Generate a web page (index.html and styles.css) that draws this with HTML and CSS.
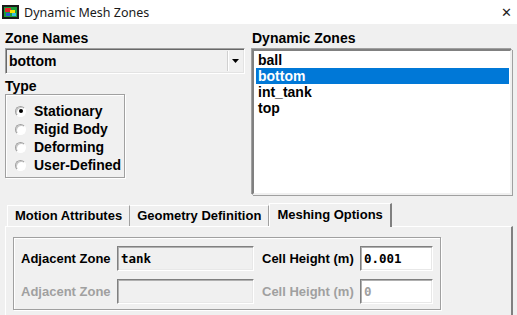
FILE: index.html
```html
<!DOCTYPE html>
<html lang="en">
<head>
  <meta charset="UTF-8">
  <title>Dynamic Mesh Zones</title>
  <link rel="stylesheet" href="styles.css">
</head>
<body>
  <div class="window">
    <div class="titlebar">
      <svg class="app-icon" width="17" height="14" viewBox="0 0 17 14">
        <rect x="0" y="0" width="17" height="14" fill="#1a1a1a"/>
        <rect x="2" y="2" width="13" height="10" fill="#1e9e3a"/>
        <rect x="3" y="3" width="6" height="4" fill="#e8262a"/>
        <rect x="8" y="5" width="5" height="3" fill="#f4e000"/>
        <rect x="4" y="8" width="4" height="3" fill="#2a5ad8"/>
        <rect x="10" y="8" width="4" height="3" fill="#35c0e0"/>
      </svg>
      <span class="title">Dynamic Mesh Zones</span>
      <span class="close">&#x2715;</span>
    </div>

    <div class="top">
      <div class="left-col">
        <div class="label">Zone Names</div>
        <div class="combo">
          <span class="combo-text">bottom</span>
          <span class="combo-btn">
            <svg width="7" height="4" viewBox="0 0 7 4"><path d="M0 0h7L3.5 4z" fill="#000"/></svg>
          </span>
        </div>
        <div class="label type-label">Type</div>
        <div class="groupbox type-box">
          <div class="radio-row"><span class="radio checked"></span>Stationary</div>
          <div class="radio-row"><span class="radio"></span>Rigid Body</div>
          <div class="radio-row"><span class="radio"></span>Deforming</div>
          <div class="radio-row"><span class="radio"></span>User-Defined</div>
        </div>
      </div>

      <div class="right-col">
        <div class="label">Dynamic Zones</div>
        <ul class="listbox">
          <li>ball</li>
          <li class="selected">bottom</li>
          <li>int_tank</li>
          <li>top</li>
        </ul>
      </div>
    </div>

    <div class="tabs">
      <div class="tab first">Motion Attributes</div>
      <div class="tab">Geometry Definition</div>
      <div class="tab active">Meshing Options</div>
    </div>

    <div class="tab-panel">
      <div class="groupbox options-box">
        <div class="field-row">
          <span class="field-label zone-label">Adjacent Zone</span>
          <span class="entry gray">tank</span>
          <span class="field-label height-label">Cell Height (m)</span>
          <span class="entry white">0.001</span>
        </div>
        <div class="field-row disabled">
          <span class="field-label zone-label">Adjacent Zone</span>
          <span class="entry gray"></span>
          <span class="field-label height-label">Cell Height (m)</span>
          <span class="entry white">0</span>
        </div>
      </div>
    </div>
  </div>
</body>
</html>
```

FILE: styles.css
```css
body {
  margin: 0;
  padding: 0;
  width: 517px;
  height: 315px;
  overflow: hidden;
  background: #f0f0f0;
  font-family: 'Liberation Sans', Arial, sans-serif;
  font-weight: bold;
  font-size: 14px;
  color: #000;
}

.window {
  width: 517px;
  height: 315px;
  overflow: hidden;
}

.titlebar {
  height: 24px;
  background: #fff;
  display: flex;
  align-items: center;
  padding-left: 2px;
  box-sizing: border-box;
}

.title {
  margin-left: 5px;
  font-family: 'Noto Sans', sans-serif;
  font-weight: normal;
  font-size: 12.5px;
  color: #1a1a1a;
}

.close {
  margin-left: auto;
  margin-right: 5px;
  font-family: 'DejaVu Sans', sans-serif;
  font-weight: normal;
  font-size: 13px;
  color: #222;
}

.top {
  display: flex;
  padding: 6px 5px 0 5px;
  gap: 7px;
}

.left-col {
  width: 240px;
}

.label {
  height: 18px;
  line-height: 16px;
}

.combo {
  height: 26px;
  box-sizing: border-box;
  border: 1px solid;
  border-color: #a0a0a0 #fff #fff #a0a0a0;
  box-shadow: inset 1px 1px 0 #696969, inset -1px -1px 0 #e3e3e3;
  display: flex;
  align-items: center;
  background: #f0f0f0;
}

.combo-text {
  padding-left: 3px;
  flex: 1;
}

.combo-btn {
  width: 13px;
  height: 20px;
  margin-right: 2px;
  display: flex;
  align-items: center;
  justify-content: center;
  border-left: 1px solid #fff;
  box-shadow: -1px 0 0 #d0d0d0;
}

.type-label {
  margin-top: 4px;
  height: 16px;
}

.groupbox {
  border: 1px solid #a0a0a0;
  box-shadow: inset 1px 1px 0 #fff, 1px 1px 0 #fff;
}

.type-box {
  width: 120px;
  height: 84px;
  box-sizing: border-box;
  padding-top: 7px;
}

.radio-row {
  height: 18px;
  display: flex;
  align-items: center;
  padding-left: 9px;
  gap: 8px;
}

.radio {
  width: 11px;
  height: 11px;
  border-radius: 50%;
  box-sizing: border-box;
  background: #fff;
  border: 1px solid;
  border-color: #a0a0a0 #fff #fff #a0a0a0;
  box-shadow: inset 1px 1px 0 #c8c8c8;
  position: relative;
}

.radio.checked::after {
  content: '';
  position: absolute;
  left: 2.5px;
  top: 2.5px;
  width: 4px;
  height: 4px;
  border-radius: 50%;
  background: #000;
}

.right-col {
  width: 260px;
}

.listbox {
  list-style: none;
  margin: 1px 0 0 0;
  padding: 1px 1px 0 2px;
  height: 146px;
  box-sizing: border-box;
  background: #fff;
  border: 2px solid;
  border-color: #808080 #f0f0f0 #f0f0f0 #808080;
  box-shadow: 1px 1px 0 #a0a0a0, -1px -1px 0 #a0a0a0;
}

.listbox li {
  height: 16px;
  line-height: 16px;
  padding-left: 2px;
}

.listbox li.selected {
  background: #0078d7;
  color: #fff;
}

.tabs {
  display: flex;
  align-items: flex-end;
  margin-top: 8px;
  padding-left: 7px;
  height: 23px;
}

.tab {
  height: 20px;
  line-height: 20px;
  padding: 0 7px;
  border-top: 1px solid #fff;
  border-right: 1px solid #a0a0a0;
  font-size: 13px;
  white-space: nowrap;
}

.tab.first {
  border-left: 1px solid #fff;
}

.tab.active {
  height: 23px;
  line-height: 22px;
  border-left: 1px solid #fff;
  border-right: 2px solid #808080;
  margin-bottom: -1px;
  background: #f0f0f0;
  position: relative;
}

.tab-panel {
  margin: 0 4px 0 5px;
  height: 100px;
  border-top: 1px solid #fff;
  border-left: 1px solid #fff;
  border-right: 2px solid #808080;
  padding: 10px 0 0 7px;
}

.options-box {
  width: 428px;
  height: 73px;
  box-sizing: border-box;
  padding-top: 8px;
}

.field-row {
  display: flex;
  align-items: center;
  height: 25px;
  margin-bottom: 8px;
}

.field-label {
  padding-left: 7px;
  font-size: 13px;
  white-space: nowrap;
  box-sizing: border-box;
}

.zone-label {
  width: 103px;
}

.height-label {
  width: 98px;
  padding-left: 0;
}

.entry {
  height: 25px;
  box-sizing: border-box;
  border: 1px solid;
  border-color: #808080 #fff #fff #808080;
  box-shadow: inset 1px 1px 0 #b0b0b0, inset -1px -1px 0 #e8e8e8;
  font-family: 'DejaVu Sans Mono', monospace;
  font-weight: bold;
  font-size: 12.5px;
  line-height: 23px;
  padding-left: 3px;
}

.entry.gray {
  width: 137px;
  margin-right: 8px;
  background: #f0f0f0;
}

.entry.white {
  width: 73px;
  background: #fff;
}

.disabled .field-label,
.disabled .entry {
  color: #a0a0a0;
}
```
